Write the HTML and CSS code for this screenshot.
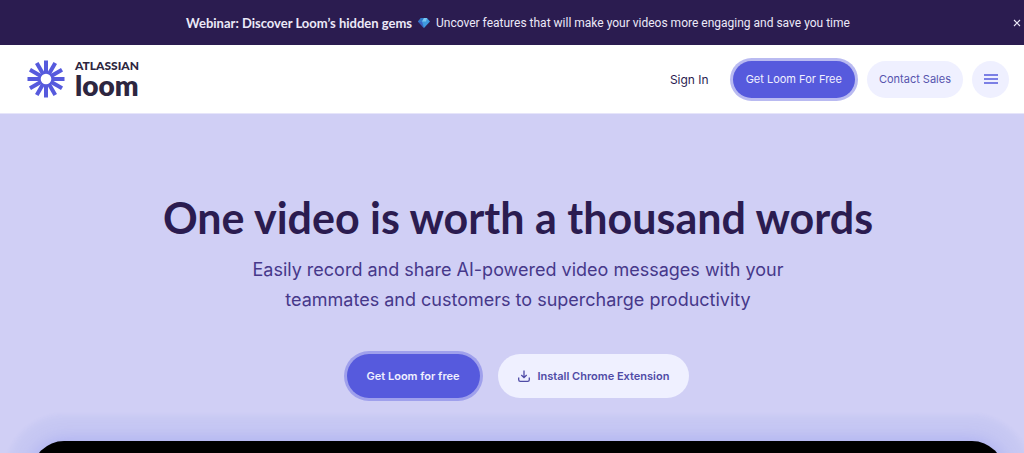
FILE: index.html
```html
<!DOCTYPE html>
<html lang="en">
<head>
    <meta charset="UTF-8">
    <meta name="viewport" content="width=device-width, initial-scale=1.0">
    <title>Loom</title>
    <link rel="stylesheet" href="styles.css">
</head>
<body>
    <!-- Announcement banner -->
    <div class="banner">
        <p class="banner-text">
            <strong>Webinar: Discover Loom’s hidden gems</strong>
            <svg class="gem" viewBox="0 0 12 10" aria-hidden="true">
                <path d="M3 0h6l3 3.5L6 10 0 3.5z" fill="#3f9be0"/>
                <path d="M3 0h3L4 3.5H0z" fill="#2f78c8"/>
                <path d="M6 0h3l-1 3.5H4z" fill="#7cc8f2"/>
                <path d="M0 3.5h4L6 10z" fill="#3a62c4"/>
            </svg>
            <span>Uncover features that will make your videos more engaging and save you time</span>
        </p>
        <button class="banner-close" type="button" aria-label="Close">
            <svg viewBox="0 0 8 8"><path d="M1 1l6 6M7 1L1 7" stroke="currentColor" stroke-width="1.1" fill="none"/></svg>
        </button>
    </div>

    <!-- Header -->
    <header class="header">
        <a class="logo" href="#" aria-label="Atlassian Loom">
            <svg class="logo-mark" viewBox="-19 -19 38 38" aria-hidden="true">
                <g stroke="#565add" stroke-width="4">
                    <path d="M0-18.500V18.500M-18.500 0H18.500"/>
                    <path d="M0-18.500V18.500" transform="rotate(30)"/>
                    <path d="M0-18.500V18.500" transform="rotate(60)"/>
                    <path d="M0-18.500V18.500" transform="rotate(120)"/>
                    <path d="M0-18.500V18.500" transform="rotate(150)"/>
                </g>
                <circle r="7.500" fill="#565add"/>
                <circle r="5.300" fill="#fff"/>
            </svg>
            <span class="logo-words">
                <span class="logo-parent">ATLASSIAN</span>
                <span class="logo-name">loom</span>
            </span>
        </a>
        <nav class="nav">
            <a class="sign-in" href="#">Sign In</a>
            <a class="pill pill-primary" href="#">Get Loom For Free</a>
            <a class="pill pill-light" href="#">Contact Sales</a>
            <button class="menu-button" type="button" aria-label="Menu">
                <svg viewBox="0 0 14 12"><path d="M0 2h14M0 6h14M0 10h14" stroke="currentColor" stroke-width="1.300"/></svg>
            </button>
        </nav>
    </header>

    <!-- Hero -->
    <main class="hero">
        <h1>One video is worth a thousand words</h1>
        <p class="lead">Easily record and share AI-powered video messages with your teammates and customers to supercharge productivity</p>
        <div class="actions">
            <a class="cta cta-primary" href="#">Get Loom for free</a>
            <a class="cta cta-light" href="#">
                <svg class="download" viewBox="0 0 12 12" aria-hidden="true">
                    <path d="M6 0.500v7M3.300 5L6 7.700 8.700 5M0.700 7.500v2.200q0 1.600 1.600 1.600h7.400q1.600 0 1.600-1.600V7.500" fill="none" stroke="currentColor" stroke-width="1.300"/>
                </svg>
                Install Chrome Extension
            </a>
        </div>
        <div class="video"></div>
    </main>
</body>
</html>
```

FILE: styles.css
```css
* {
    box-sizing: border-box;
}

body {
    margin: 0;
    min-height: 100vh;
    display: flex;
    flex-direction: column;
    background-color: #d0cff5;
    color: #2b1c50;
    font-family: Lato, "Liberation Sans", sans-serif;
}

a {
    color: inherit;
    text-decoration: none;
}

button {
    padding: 0;
    border: none;
    cursor: pointer;
}

/* Announcement banner */
.banner {
    display: flex;
    align-items: center;
    height: 45px;
    padding: 0 3px 0 23px;
    background-color: #2b1c50;
    color: #ece9f8;
    font-family: Roboto, sans-serif;
    font-size: 12px;
}

.banner-text {
    display: flex;
    flex: 1;
    align-items: center;
    justify-content: center;
    gap: 6px;
    margin: 0;
    white-space: nowrap;
}

.banner-text strong {
    font-family: Lato, sans-serif;
    font-size: 13px;
    font-weight: 700;
}

.gem {
    width: 12px;
    height: 10px;
}

.banner-close {
    display: flex;
    background: none;
    color: #ece9f8;
}

.banner-close svg {
    width: 8px;
    height: 8px;
}

/* Header */
.header {
    display: flex;
    align-items: center;
    justify-content: space-between;
    height: 69px;
    padding: 0 15px 0 27px;
    background-color: #fff;
    border-bottom: 1px solid #e6e5fa;
}

.logo {
    display: flex;
    align-items: center;
    gap: 10px;
    color: #2d2640;
}

.logo-mark {
    width: 38px;
    height: 38px;
}

.logo-words {
    display: flex;
    flex-direction: column;
}

.logo-parent {
    font-size: 12px;
    font-weight: 900;
    line-height: 12px;
}

.logo-name {
    font-size: 28px;
    font-weight: 800;
    line-height: 26px;
}

.nav {
    display: flex;
    align-items: center;
    gap: 9px;
    font-size: 12px;
}

.sign-in {
    margin-right: 15px;
    font-family: Inter, sans-serif;
}

.pill {
    display: flex;
    align-items: center;
    height: 37px;
    padding: 0 12px;
    border-radius: 20px;
    font-family: Inter, sans-serif;
    font-size: 11px;
}

.pill-primary {
    margin-right: 3px;
    padding: 0 13px;
    background-color: #565add;
    color: #f0f0ff;
    box-shadow: 0 0 0 3px #b9baf1;
}

.pill-light {
    background-color: #eff0ff;
    color: #5654ae;
}

.menu-button {
    display: flex;
    align-items: center;
    justify-content: center;
    width: 37px;
    height: 37px;
    border-radius: 50%;
    background-color: #eff0ff;
    color: #565add;
}

.menu-button svg {
    width: 14px;
    height: 12px;
}

/* Hero */
.hero {
    flex: 1;
    display: flex;
    flex-direction: column;
    align-items: center;
    padding: 77px 20px 0 32px;
    overflow: hidden;
    text-align: center;
}

h1 {
    margin: 0;
    font-size: 43px;
    font-weight: 700;
    line-height: 54px;
}

.lead {
    max-width: 570px;
    margin: 10px 0 0;
    color: #46388a;
    font-family: Inter, sans-serif;
    font-size: 18px;
    line-height: 30px;
}

.actions {
    display: flex;
    gap: 18px;
    margin-top: 39px;
}

.cta {
    display: flex;
    align-items: center;
    gap: 8px;
    height: 44px;
    padding: 0 20px;
    border-radius: 22px;
    font-family: Inter, sans-serif;
    font-size: 11px;
    font-weight: 600;
}

.cta-primary {
    background-color: #565add;
    color: #f0f0ff;
    box-shadow: 0 0 0 3px #9fa0ec;
}

.cta-light {
    background-color: #eff0ff;
    color: #4f4ba6;
}

.download {
    width: 12px;
    height: 12px;
}

/* The player is cut off by the bottom of the hero */
.video {
    align-self: stretch;
    flex: 1 0 120px;
    margin-top: 43px;
    margin-bottom: -108px;
    border-radius: 32px;
    background-color: #000;
    box-shadow: 0 0 20px rgba(86, 100, 240, 0.3), 0 0 4px 26px rgba(86, 120, 221, 0.06);
}
```
